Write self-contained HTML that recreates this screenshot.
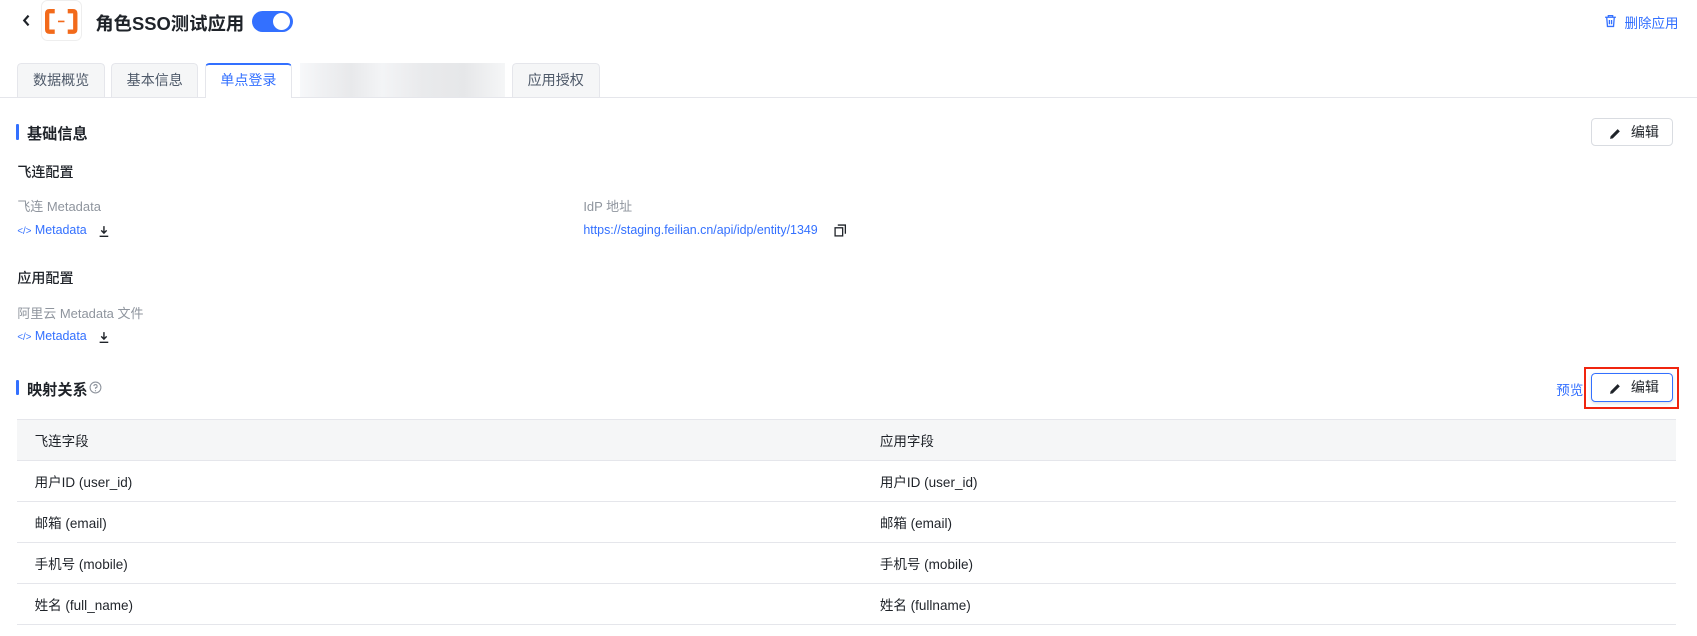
<!DOCTYPE html>
<html><head><meta charset="utf-8"><style>
html,body{margin:0;padding:0;background:#fff;overflow:hidden}
body{width:1697px;height:636px}
#w{zoom:1.08227;width:1568px;height:588px;position:relative;font-family:"Liberation Sans","Noto Sans CJK SC",sans-serif;color:#1f2329}
.a{position:absolute;white-space:nowrap}
.tab{position:absolute;top:58px;height:32px;box-sizing:border-box;border:1px solid #e5e6eb;border-bottom:none;background:#f5f6f7;border-radius:4px 4px 0 0;font-size:13px;color:#4e5969;text-align:center;line-height:31px}
.btn{position:absolute;width:76px;height:26px;box-sizing:border-box;border:1px solid #d9dce1;border-radius:4px;font-size:13px;line-height:26px;color:#1f2329;background:#fff}
.btn svg{position:absolute;left:16px;top:7px}
.btn span{position:absolute;left:36px;top:-1px}
.h{font-size:14px;font-weight:bold}
.bar{position:absolute;left:15px;width:3px;height:14px;background:#3370ff;border-radius:1px}
.lab{font-size:12px;color:#8f959e}
.lnk{font-size:11.5px;color:#3370ff}
.s{font-size:13px;font-weight:500}
table{position:absolute;left:16px;top:387px;width:1533px;border-collapse:collapse;font-size:12.5px}
td{height:37px;border:1px solid #e5e6eb;border-left:none;border-right:none;padding:0 0 0 16px}
tr:first-child td{background:#f5f6f7}
</style></head><body><div id="w">
<svg class="a" style="left:19px;top:13px" width="10" height="12" viewBox="0 0 10 12"><path d="M7 1.5L3 6l4 4.5" stroke="#1f2329" stroke-width="2" fill="none"/></svg>
<div class="a" style="left:38px;top:0;width:38px;height:38px;border:1px solid #eee;border-radius:6px;box-sizing:border-box"></div>
<svg class="a" style="left:42px;top:8px" width="30" height="23" viewBox="0 0 30 23"><path d="M9 2H4Q2 2 2 4V19Q2 21 4 21H9M21 2H26Q28 2 28 4V19Q28 21 26 21H21" stroke="#f26a1b" stroke-width="4" fill="none"/><path d="M12 11.5H18" stroke="#f26a1b" stroke-width="1.5"/></svg>
<div class="a" style="left:88px;top:9px;font-size:17px;font-weight:bold">角色SSO测试应用</div>
<div class="a" style="left:233px;top:10px;width:38px;height:20px;border-radius:10px;background:#3370ff"></div>
<div class="a" style="left:252px;top:12px;width:16px;height:16px;border-radius:8px;background:#fff"></div>
<svg class="a" style="left:1482px;top:13px" width="12" height="13" viewBox="0 0 12 13"><path d="M1 3h10M4 3V1.5h4V3M2.5 3l.7 8.5h5.6L9.5 3M5 5.5v4M7 5.5v4" stroke="#3370ff" stroke-width="1.2" fill="none"/></svg>
<div class="a" style="left:1501px;top:11px;font-size:12.5px;color:#3370ff">删除应用</div>
<div class="a" style="left:0;top:90px;width:1568px;height:1px;background:#e5e6eb"></div>
<div class="tab" style="left:16px;width:81px">数据概览</div>
<div class="tab" style="left:103px;width:80px">基本信息</div>
<div class="tab" style="left:189px;width:81px;height:33px;background:#fff;color:#3370ff;border-top:2px solid #3370ff;line-height:29px">单点登录</div>
<div class="a" style="left:277px;top:58px;width:190px;height:32px;background:linear-gradient(90deg,#f7f8fa 0,#f0f1f3 10%,#e8e9eb 25%,#f3f4f6 40%,#e9eaec 60%,#e6e7e9 80%,#f5f6f7 100%)"></div>
<div class="tab" style="left:473px;width:81px">应用授权</div>
<div class="bar" style="top:115px"></div>
<div class="a h" style="left:25px;top:113px">基础信息</div>
<div class="btn" style="left:1470px;top:109px"><svg width="12" height="12" viewBox="0 0 12 12"><path d="M1 11l.5-2.5L8 2l2 2-6.5 6.5z" fill="#1f2329"/></svg><span>编辑</span></div>
<div class="a s" style="left:16px;top:150px">飞连配置</div>
<div class="a lab" style="left:16px;top:181px">飞连 Metadata</div>
<div class="a lnk" style="left:16px;top:206px"><span style="font-size:9px">&lt;/&gt;</span> Metadata</div>
<svg class="a" style="left:91px;top:208px" width="11" height="12" viewBox="0 0 11 12"><path d="M5.5 1v6M3 5l2.5 2.5L8 5M1.5 10.5h8" stroke="#1f2329" stroke-width="1.3" fill="none"/></svg>
<div class="a lab" style="left:539px;top:181px">IdP 地址</div>
<div class="a lnk" style="left:539px;top:206px">https://staging.feilian.cn/api/idp/entity/1349</div>
<svg class="a" style="left:771px;top:207px" width="12" height="12" viewBox="0 0 12 12"><rect x="1" y="3.5" width="7" height="7.5" stroke="#1f2329" stroke-width="1.2" fill="none"/><path d="M3.5 1h7v8" stroke="#1f2329" stroke-width="1.2" fill="none"/></svg>
<div class="a s" style="left:16px;top:248px">应用配置</div>
<div class="a lab" style="left:16px;top:280px">阿里云 Metadata 文件</div>
<div class="a lnk" style="left:16px;top:304px"><span style="font-size:9px">&lt;/&gt;</span> Metadata</div>
<svg class="a" style="left:91px;top:306px" width="11" height="12" viewBox="0 0 11 12"><path d="M5.5 1v6M3 5l2.5 2.5L8 5M1.5 10.5h8" stroke="#1f2329" stroke-width="1.3" fill="none"/></svg>
<div class="bar" style="top:351px"></div>
<div class="a h" style="left:25px;top:349px">映射关系</div>
<svg class="a" style="left:82px;top:352px" width="12" height="12" viewBox="0 0 12 12"><circle cx="6" cy="6" r="5" stroke="#8f959e" fill="none"/><path d="M4.5 4.7a1.5 1.5 0 1 1 1.5 1.6V7.3" stroke="#8f959e" fill="none"/><circle cx="6" cy="9" r=".6" fill="#8f959e"/></svg>
<div class="a" style="left:1438px;top:350px;font-size:12.5px;color:#3370ff">预览</div>
<div class="btn" style="left:1470px;top:345px;border-color:#3370ff;box-shadow:0 1px 3px rgba(0,0,0,.12)"><svg width="12" height="12" viewBox="0 0 12 12"><path d="M1 11l.5-2.5L8 2l2 2-6.5 6.5z" fill="#1f2329"/></svg><span>编辑</span></div>
<div class="a" style="left:1464px;top:339px;width:87px;height:39px;box-sizing:border-box;border:2.5px solid #f0250f"></div>
<table>
<tr><td style="width:765px">飞连字段</td><td>应用字段</td></tr>
<tr><td>用户ID (user_id)</td><td>用户ID (user_id)</td></tr>
<tr><td>邮箱 (email)</td><td>邮箱 (email)</td></tr>
<tr><td>手机号 (mobile)</td><td>手机号 (mobile)</td></tr>
<tr><td>姓名 (full_name)</td><td>姓名 (fullname)</td></tr>
</table>
</div></body></html>
